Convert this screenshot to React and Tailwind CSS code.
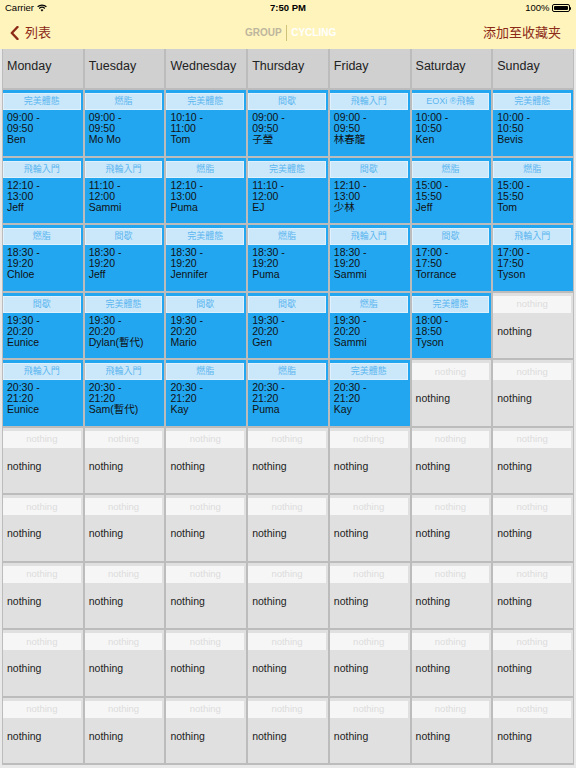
const DAYS = ["Monday", "Tuesday", "Wednesday", "Thursday", "Friday", "Saturday", "Sunday"];

// one row per time slot, one entry per weekday; null = no class
const ROWS = [
  [
    ["完美體態", "09:00", "09:50", "Ben"],
    ["燃脂", "09:00", "09:50", "Mo Mo"],
    ["完美體態", "10:10", "11:00", "Tom"],
    ["間歇", "09:00", "09:50", "子瑩"],
    ["飛輪入門", "09:00", "09:50", "林春龍"],
    ["EOXi ®飛輪", "10:00", "10:50", "Ken"],
    ["完美體態", "10:00", "10:50", "Bevis"],
  ],
  [
    ["飛輪入門", "12:10", "13:00", "Jeff"],
    ["飛輪入門", "11:10", "12:00", "Sammi"],
    ["燃脂", "12:10", "13:00", "Puma"],
    ["完美體態", "11:10", "12:00", "EJ"],
    ["間歇", "12:10", "13:00", "少林"],
    ["燃脂", "15:00", "15:50", "Jeff"],
    ["燃脂", "15:00", "15:50", "Tom"],
  ],
  [
    ["燃脂", "18:30", "19:20", "Chloe"],
    ["間歇", "18:30", "19:20", "Jeff"],
    ["完美體態", "18:30", "19:20", "Jennifer"],
    ["燃脂", "18:30", "19:20", "Puma"],
    ["飛輪入門", "18:30", "19:20", "Sammi"],
    ["間歇", "17:00", "17:50", "Torrance"],
    ["飛輪入門", "17:00", "17:50", "Tyson"],
  ],
  [
    ["間歇", "19:30", "20:20", "Eunice"],
    ["完美體態", "19:30", "20:20", "Dylan(暫代)"],
    ["間歇", "19:30", "20:20", "Mario"],
    ["間歇", "19:30", "20:20", "Gen"],
    ["燃脂", "19:30", "20:20", "Sammi"],
    ["完美體態", "18:00", "18:50", "Tyson"],
    null,
  ],
  [
    ["飛輪入門", "20:30", "21:20", "Eunice"],
    ["飛輪入門", "20:30", "21:20", "Sam(暫代)"],
    ["燃脂", "20:30", "21:20", "Kay"],
    ["燃脂", "20:30", "21:20", "Puma"],
    ["完美體態", "20:30", "21:20", "Kay"],
    null,
    null,
  ],
  ...Array.from({ length: 5 }, () => Array(7).fill(null)),
];

const FONT = { fontFamily: '"Liberation Sans", "Noto Sans CJK TC", sans-serif' };

function ClassCell({ slot }) {
  const [name, start, end, coach] = slot;
  return (
    <div className="h-[65.5px] bg-[#22a6f0] flex flex-col">
      <div className="mt-[3px] mr-[2px] h-[17px] border border-[#def1fd] bg-[#cbe8fb] flex items-center justify-center text-[#5cb6ef] text-[9px] leading-none">
        {name}
      </div>
      <div className="flex-1 flex items-center pl-[4px] pb-[8px] text-[10.5px] leading-[11px] text-[#111]">
        <div>
          <div>{start} -</div>
          <div>{end}</div>
          <div>{coach}</div>
        </div>
      </div>
    </div>
  );
}

function EmptyCell() {
  return (
    <div className="h-[65.5px] bg-[#e0e0e0] flex flex-col">
      <div className="mt-[3px] mr-[2px] h-[17px] bg-[#f6f6f6] flex items-center justify-center text-[#dcdcdc] text-[9.5px] leading-none">
        nothing
      </div>
      <div className="flex-1 flex items-center pl-[4px] pb-[8px] text-[10.5px] leading-[11px] text-[#222]">
        nothing
      </div>
    </div>
  );
}

function Battery() {
  return (
    <div className="flex items-center">
      <div className="w-[18px] h-[8px] border border-black rounded-[2px] p-[1px]">
        <div className="w-full h-full bg-black rounded-[1px]" />
      </div>
      <div className="w-[1.5px] h-[3px] bg-black rounded-r-sm" />
    </div>
  );
}

export default function App() {
  return (
    <div className="w-full h-[768px] overflow-hidden bg-[#e9e9e9]" style={FONT}>
      {/* status bar + nav bar */}
      <div className="bg-[#fff4bb]">
        <div className="h-[16px] relative flex items-center justify-between px-[5px] text-[9.5px] text-black">
          <div className="flex items-center gap-[3px]">
            <span>Carrier</span>
            <svg width="10" height="8" viewBox="0 0 10 8">
              <path d="M0.6 2.8 A6.5 6.5 0 0 1 9.4 2.8" fill="none" stroke="black" strokeWidth="1.2" />
              <path d="M2.2 4.5 A4.2 4.2 0 0 1 7.8 4.5" fill="none" stroke="black" strokeWidth="1.2" />
              <path d="M5 7.6 L3.6 6 A2 2 0 0 1 6.4 6 Z" fill="black" />
            </svg>
          </div>
          <span className="absolute left-1/2 -translate-x-1/2 font-semibold">7:50 PM</span>
          <div className="flex items-center gap-[2px]">
            <span>100%</span>
            <Battery />
          </div>
        </div>
        <div className="h-[33px] relative flex items-center justify-between px-[10px]">
          <div className="flex items-center gap-[6px] text-[#8c2a18]">
            <svg width="9" height="14" viewBox="0 0 9 14">
              <path d="M7.5 1 L1.8 7 L7.5 13" fill="none" stroke="#8c2a18" strokeWidth="2.4" strokeLinecap="round" strokeLinejoin="round" />
            </svg>
            <span className="text-[13px]">列表</span>
          </div>
          <div className="absolute left-[245px] flex items-center text-[10px] font-bold">
            <span className="text-[#bdb69e]">GROUP</span>
            <span className="mx-[4px] w-[1.5px] h-[16px] bg-[#cfc27a]" />
            <span className="text-white">CYCLING</span>
          </div>
          <span className="text-[13px] text-[#8c2a18] pr-[5px]">添加至收藏夹</span>
        </div>
      </div>

      {/* weekly timetable */}
      <div className="px-[2px]">
        <div className="grid grid-cols-7 gap-[2px] bg-[#bcbcbc] px-[1px] pb-[2px]">
          {DAYS.map((d) => (
            <div key={d} className="h-[39px] bg-[#d0d0d0] pl-[4px] pt-[8px] text-[12.5px] text-[#222]">
              {d}
            </div>
          ))}
          {ROWS.map((row, r) =>
            row.map((slot, c) =>
              slot ? <ClassCell key={`${r}-${c}`} slot={slot} /> : <EmptyCell key={`${r}-${c}`} />
            )
          )}
        </div>
      </div>
    </div>
  );
}
